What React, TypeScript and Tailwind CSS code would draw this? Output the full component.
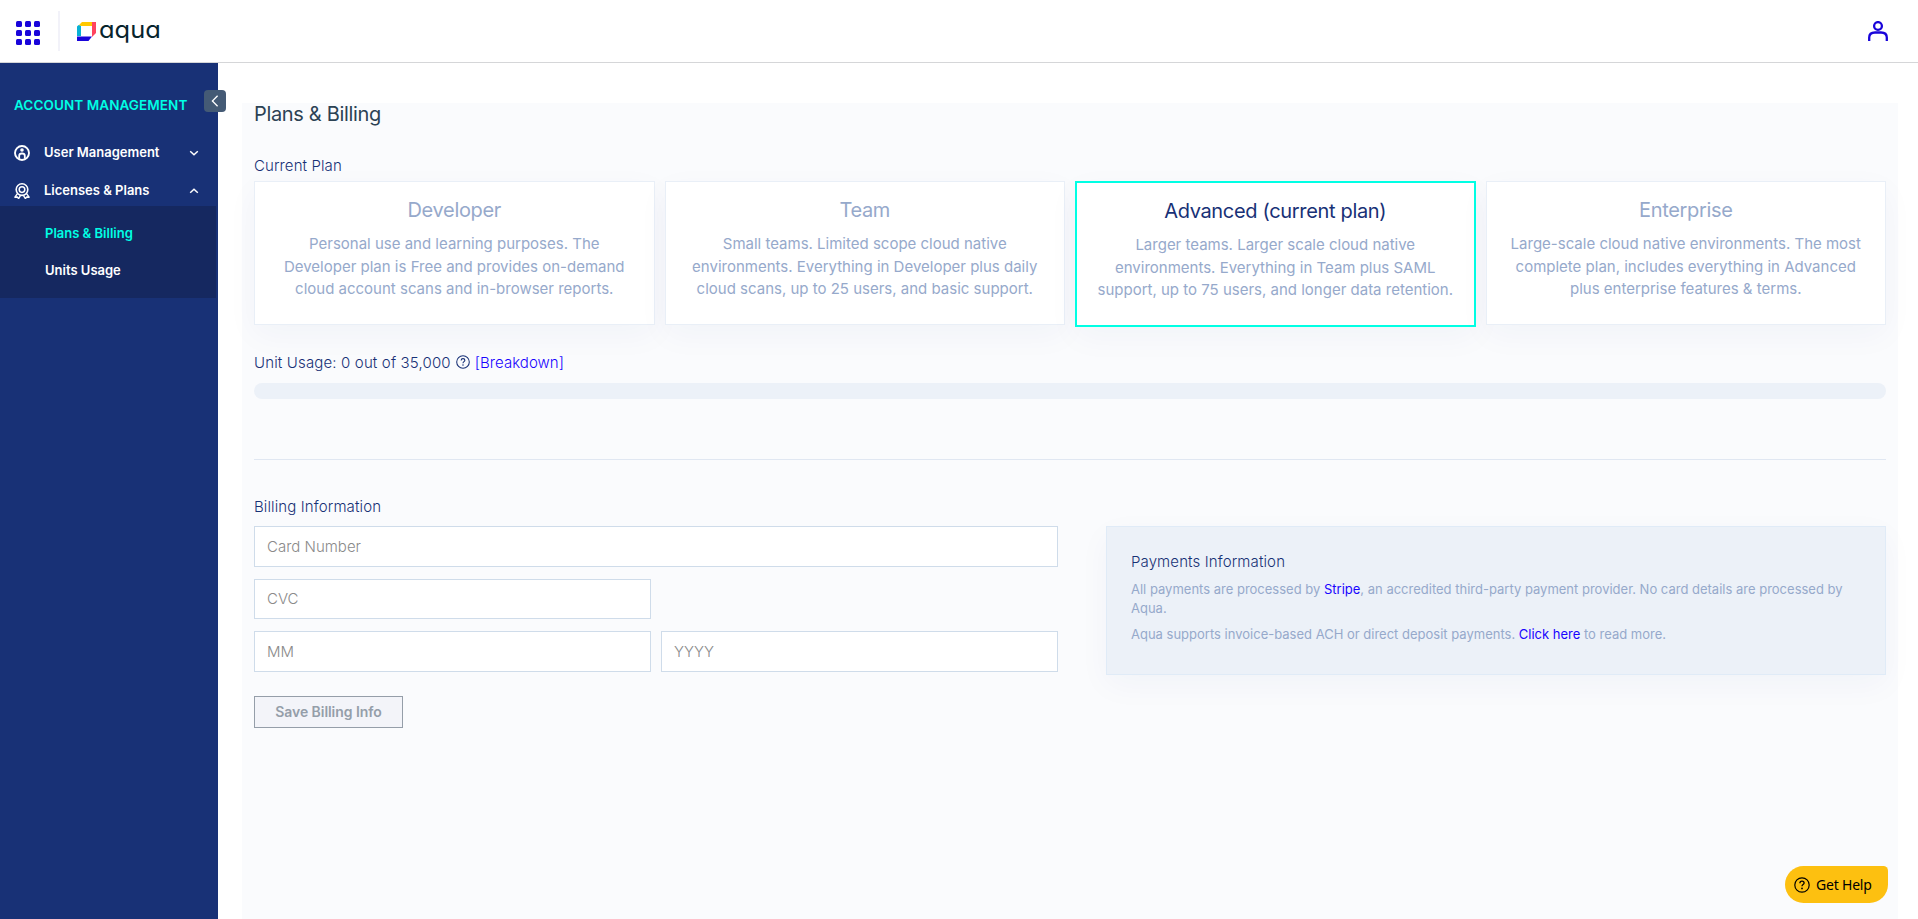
import React from "react";

const plans = [
  {
    name: "Developer",
    lines: ["Personal use and learning purposes. The", "Developer plan is Free and provides on-demand", "cloud account scans and in-browser reports."],
  },
  {
    name: "Team",
    lines: ["Small teams. Limited scope cloud native", "environments. Everything in Developer plus daily", "cloud scans, up to 25 users, and basic support."],
  },
  {
    name: "Advanced (current plan)",
    current: true,
    lines: ["Larger teams. Larger scale cloud native", "environments. Everything in Team plus SAML", "support, up to 75 users, and longer data retention."],
  },
  {
    name: "Enterprise",
    lines: ["Large-scale cloud native environments. The most", "complete plan, includes everything in Advanced", "plus enterprise features & terms."],
  },
];

function AppsIcon() {
  return (
    <svg width="24" height="24" viewBox="0 0 24 24" fill="#1904DA">
      {[0, 9, 18].map((y) => [0, 9, 18].map((x) => <rect key={`${x}-${y}`} x={x} y={y} width="6" height="6" rx="1.5" />))}
    </svg>
  );
}

function LogoMark() {
  return (
    <svg width="19" height="19" viewBox="0 0 19 19">
      <path d="M5 0H15V4H4.5L1.6 3.4Z" fill="#ffc900" />
      <path d="M15 0H19V11L15 15Z" fill="#ff445f" />
      <path d="M4 4V14H0V4.6L1.6 3Z" fill="#08b1d5" />
      <path d="M0 14.5H15L11.5 19H0Z" fill="#1904da" />
    </svg>
  );
}

function UserCircleIcon() {
  return (
    <svg width="16" height="16" viewBox="0 0 16 16" fill="none" stroke="#fff">
      <circle cx="8" cy="8" r="7" strokeWidth="1.9" />
      <circle cx="8" cy="5" r="1.8" fill="#fff" stroke="none" />
      <path d="M5.2 13.8V10.8C5.2 9.3 6.4 8.5 8 8.5S10.8 9.3 10.8 10.8V13.8" strokeWidth="1.8" />
    </svg>
  );
}

function AwardIcon() {
  return (
    <svg width="16" height="16" viewBox="0 0 16 16" fill="none" stroke="#fff" strokeLinejoin="round">
      <circle cx="8" cy="6.6" r="5.8" strokeWidth="1.6" />
      <circle cx="8" cy="6.6" r="2.8" strokeWidth="1.5" />
      <path d="M3.4 10.6L0.9 14.2L3.3 14L4.6 15.6L6.6 12.4M12.6 10.6L15.1 14.2L12.7 14L11.4 15.6L9.4 12.4" strokeWidth="1.4" />
    </svg>
  );
}

function Chevron({ up = false }: { up?: boolean }) {
  return (
    <svg width="10" height="6" viewBox="0 0 10 6" fill="none" stroke="#fff" strokeWidth="1.5">
      <path d={up ? "M1.2 4.8L5 1.3L8.8 4.8" : "M1.2 1.2L5 4.7L8.8 1.2"} />
    </svg>
  );
}

function HelpIcon({ className }: { className: string }) {
  return (
    <svg className={className} viewBox="0 0 16 16" fill="none" stroke="currentColor">
      <circle cx="8" cy="8" r="7.2" strokeWidth="1.2" />
      <path d="M5.9 6.3C5.9 5 6.8 4.2 8 4.2S10.1 5 10.1 6.1C10.1 7.6 8 7.6 8 9.3" strokeWidth="1.3" />
      <circle cx="8" cy="11.4" r="0.9" fill="currentColor" stroke="none" />
    </svg>
  );
}

function Field({ placeholder, className }: { placeholder: string; className: string }) {
  return (
    <input
      placeholder={placeholder}
      className={`${className} border border-[#cfdcea] bg-white px-3 text-[15px] font-light text-[#183176] outline-none placeholder:text-[#8a8a8a]`}
    />
  );
}

export default function App() {
  return (
    <div className="flex h-[919px] w-full flex-col overflow-hidden bg-white font-['Inter',sans-serif]">
      <header className="flex h-[63px] shrink-0 items-center justify-between border-b border-[#d5d6d8] pr-[30px] pl-4">
        <div className="flex items-center">
          <div className="pt-1">
            <AppsIcon />
          </div>
          <div className="ml-[18px] h-10 w-0.5 bg-[#f2f2f9]" />
          <div className="ml-[17px] flex items-center">
            <LogoMark />
            <span className="mb-0.5 ml-[3px] origin-left scale-x-[1.06] text-[24px] leading-6 font-normal text-[#07242d] [font-feature-settings:'cv11']">
              aqua
            </span>
          </div>
        </div>
        <svg width="20" height="20" viewBox="0 0 20 20" fill="none" stroke="#1904DA" strokeWidth="2.3">
          <circle cx="10" cy="5" r="3.9" />
          <path d="M1.2 20V16.5C1.2 13.2 3.6 11.5 7 11.5H13C16.4 11.5 18.8 13.2 18.8 16.5V20" />
        </svg>
      </header>

      <div className="flex min-h-0 flex-1">
        <aside className="relative w-[218px] shrink-0 bg-[#183176] font-semibold text-white">
          <h2 className="pt-8 pl-3.5 text-[13.5px] leading-5 font-semibold tracking-[0.08px] whitespace-nowrap text-[#00ffe4]">ACCOUNT MANAGEMENT</h2>
          <nav className="mt-[18px] text-[13px]">
            <div className="flex h-[38px] items-center pt-0.5 pr-[19px] pl-3.5">
              <UserCircleIcon />
              <span className="ml-3.5 flex-1">User Management</span>
              <Chevron />
            </div>
            <div className="flex h-[35px] items-center pt-1 pr-[19px] pl-3.5">
              <AwardIcon />
              <span className="ml-3.5 flex-1">Licenses &amp; Plans</span>
              <Chevron up />
            </div>
            <div className="mr-0.5 flex h-[92px] flex-col bg-[#152860] pt-[9px] pl-[45px]">
              <a className="flex h-[37px] items-center text-[#00ffe4]">Plans &amp; Billing</a>
              <a className="flex h-[37px] items-center">Units Usage</a>
            </div>
          </nav>
          <button className="absolute top-[27px] left-[204px] flex size-[22px] items-center justify-center rounded bg-[#445a75]">
            <svg width="8" height="12" viewBox="0 0 8 12" fill="none" stroke="#fff" strokeWidth="1.3">
              <path d="M6.6 0.8L1.4 6L6.6 11.2" />
            </svg>
          </button>
        </aside>

        <main className="mt-10 mr-5 ml-6 flex-1 bg-[#fafbfd] px-3 text-[15px] text-[#183176]">
          <h1 className="text-xl leading-[22px] tracking-[-0.33px] text-[#2c4254]">Plans &amp; Billing</h1>
          <h3 className="mt-[31px] leading-5 font-light tracking-[0.1px]">Current Plan</h3>
          <div className="mt-[5px] grid h-[146px] grid-cols-4 items-start gap-2.5">
            {plans.map((p) => (
              <section
                key={p.name}
                className={
                  p.current
                    ? "h-[146px] border-2 border-[#00ffe4] bg-white pt-4 text-center shadow-[0_10px_30px_rgba(24,49,118,0.04)]"
                    : "h-36 border border-[#e9eff7] bg-white pt-4 text-center shadow-[0_10px_30px_rgba(24,49,118,0.04)]"
                }
              >
                <h4 className={p.current ? "text-xl leading-6 tracking-[-0.33px]" : "text-xl leading-6 tracking-[-0.33px] text-[#96a9cb]"}>
                  {p.name}
                </h4>
                <p className="mt-[11px] leading-[22.5px] whitespace-nowrap text-[#96a9cb]">
                  {p.lines.map((l) => (
                    <span key={l} className="block">
                      {l}
                    </span>
                  ))}
                </p>
              </section>
            ))}
          </div>

          <div className="mt-[26px] flex h-5 items-center font-light">
            <span className="tracking-[0.15px]">Unit Usage: 0 out of 35,000</span>
            <HelpIcon className="mx-[5px] mb-0.5 size-3.5" />
            <a className="tracking-[0.05px] text-[#1904ff]">[Breakdown]</a>
          </div>
          <div className="mt-2.5 h-4 rounded-full bg-[#ecf1f8]" />
          <div className="mt-[60px] h-px bg-[#e0e7f2]" />

          <div className="mt-[37px] flex justify-between">
            <div className="w-[804px]">
              <h3 className="leading-5 font-light tracking-[0.12px]">Billing Information</h3>
              <div className="mt-[9px] flex flex-wrap gap-x-2.5 gap-y-3">
                <Field placeholder="Card Number" className="h-[41px] w-full" />
                <Field placeholder="CVC" className="mr-[407px] h-10 w-[397px] pb-0.5" />
                <Field placeholder="MM" className="h-[41px] w-[397px]" />
                <Field placeholder="YYYY" className="h-[41px] w-[397px]" />
              </div>
              <button className="mt-6 h-8 w-[149px] border border-[#959ea9] bg-[#f3f4f9] text-sm font-semibold tracking-[-0.05px] text-[#959ea9]">
                Save Billing Info
              </button>
            </div>
            <div className="mt-[29px] h-[149px] w-[780px] border border-[#e0ebf7] bg-[#ecf1f8] pt-[25px] pr-6 pl-6 shadow-[0_10px_30px_rgba(24,49,118,0.04)]">
              <h3 className="leading-5 font-light tracking-[0.12px]">Payments Information</h3>
              <p className="mt-2 text-[13px] leading-[19px] text-[#96a9cb]">
                All payments are processed by <a className="text-[#1904ff]">Stripe</a>, an accredited third-party payment provider. No card details are processed by Aqua.
              </p>
              <p className="mt-[7px] text-[13px] leading-[19px] text-[#96a9cb]">
                Aqua supports invoice-based ACH or direct deposit payments. <a className="text-[#1904ff]">Click here</a> to read more.
              </p>
            </div>
          </div>
        </main>
      </div>

      <button className="fixed right-[30px] bottom-4 flex h-[37px] w-[103px] items-center rounded-[20px] rounded-tr-[5px] bg-[#fdc010] pl-[9px] text-black">
        <HelpIcon className="size-4" />
        <span className="ml-1.5 font-['Noto_Sans',sans-serif] text-sm font-normal tracking-[-0.2px]">Get Help</span>
      </button>
    </div>
  );
}
